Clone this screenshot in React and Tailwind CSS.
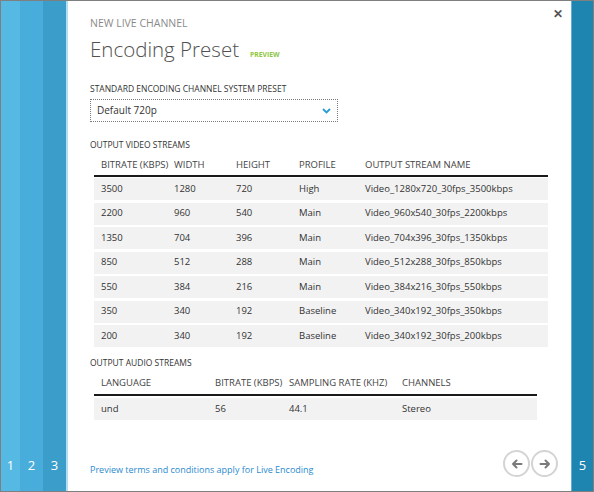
import React from 'react';

const video = [
  ['3500', '1280', '720', 'High', 'Video_1280x720_30fps_3500kbps'],
  ['2200', '960', '540', 'Main', 'Video_960x540_30fps_2200kbps'],
  ['1350', '704', '396', 'Main', 'Video_704x396_30fps_1350kbps'],
  ['850', '512', '288', 'Main', 'Video_512x288_30fps_850kbps'],
  ['550', '384', '216', 'Main', 'Video_384x216_30fps_550kbps'],
  ['350', '340', '192', 'Baseline', 'Video_340x192_30fps_350kbps'],
  ['200', '340', '192', 'Baseline', 'Video_340x192_30fps_200kbps'],
];

function Strip({ className, label }) {
  return (
    <div className={`flex flex-col justify-end items-center pb-[19px] text-white text-[13px] leading-none ${className}`}>
      {label}
    </div>
  );
}

function NavButton({ dir }) {
  return (
    <button className="w-[27px] h-[27px] rounded-full border-2 border-[#d4d4d4] flex items-center justify-center">
      <svg width="12" height="12" viewBox="0 0 12 12" fill="none" stroke="#7a7a7a" strokeWidth="2" strokeLinecap="round" strokeLinejoin="round">
        {dir === 'left' ? (
          <path d="M10.5 6H2M5.5 2.5L2 6l3.5 3.5" />
        ) : (
          <path d="M1.5 6H10M6.5 2.5L10 6l-3.5 3.5" />
        )}
      </svg>
    </button>
  );
}

export default function App() {
  return (
    <div
      className="w-[594px] h-[492px] border border-[#7f7f7f] flex bg-white overflow-hidden"
      style={{ fontFamily: '"Open Sans", "Noto Sans", sans-serif' }}
    >
      <Strip className="w-[19px] bg-[#55b9e4]" label="1" />
      <Strip className="w-[23px] bg-[#49addb]" label="2" />
      <Strip className="w-[23px] bg-[#3b9dca]" label="3" />

      <div className="flex-1 relative border-l-2 border-[#b3def2] pl-[22px] pr-[20px] flex flex-col">
        <button className="absolute right-[8px] top-[7px] text-[#555] text-[12px] font-bold leading-none">✕</button>

        <div className="pt-[16px] text-[10.5px] leading-[13px] text-[#8a8a8a]">NEW LIVE CHANNEL</div>

        <div className="flex items-baseline mt-[6px]">
          <h1 className="text-[20.5px] leading-[26px] font-light text-[#505050]">Encoding Preset</h1>
          <span className="ml-[11px] text-[6.8px] font-bold text-[#8cc63f]">PREVIEW</span>
        </div>

        <div className="mt-[21px] text-[8.5px] leading-[12px] text-[#333]">STANDARD ENCODING CHANNEL SYSTEM PRESET</div>
        <div className="mt-[4px] w-[248px] h-[23px] border border-dotted border-[#7a7a7a] flex items-center justify-between pl-[6px] pr-[6px]">
          <span className="text-[10px] text-[#333]">Default 720p</span>
          <svg width="9" height="6" viewBox="0 0 9 6" fill="none" stroke="#2a9bd8" strokeWidth="1.8">
            <path d="M1 1l3.5 3.5L8 1" />
          </svg>
        </div>

        <div className="mt-[17px] text-[8.5px] leading-[11px] text-[#333]">OUTPUT VIDEO STREAMS</div>
        <div className="mt-[5px] ml-[4px] w-[454px] text-[9.5px] text-[#333]">
          <div className="grid grid-cols-[73px_62px_63px_66px_1fr] pl-[7px] h-[22px] items-center border-b-2 border-[#1a1a1a] text-[#444]">
            <span>BITRATE (KBPS)</span>
            <span>WIDTH</span>
            <span>HEIGHT</span>
            <span>PROFILE</span>
            <span>OUTPUT STREAM NAME</span>
          </div>
          <div className="flex flex-col gap-[2.5px] mt-[1px]">
            {video.map((r) => (
              <div key={r[4]} className="grid grid-cols-[73px_62px_63px_66px_1fr] pl-[7px] h-[22px] items-center bg-[#f2f2f2]">
                {r.map((c, i) => (
                  <span key={i}>{c}</span>
                ))}
              </div>
            ))}
          </div>
        </div>

        <div className="mt-[10px] text-[8.5px] leading-[11px] text-[#333]">OUTPUT AUDIO STREAMS</div>
        <div className="mt-[5px] ml-[4px] w-[443px] text-[9.5px] text-[#333]">
          <div className="grid grid-cols-[114px_74px_113px_1fr] pl-[7px] h-[23px] items-center border-b-2 border-[#1a1a1a] text-[#444]">
            <span>LANGUAGE</span>
            <span>BITRATE (KBPS)</span>
            <span>SAMPLING RATE (KHZ)</span>
            <span>CHANNELS</span>
          </div>
          <div className="grid grid-cols-[114px_74px_113px_1fr] pl-[7px] h-[22px] mt-[2px] items-center bg-[#f2f2f2]">
            <span>und</span>
            <span>56</span>
            <span>44.1</span>
            <span>Stereo</span>
          </div>
        </div>

        <div className="mt-auto pb-[14px] flex items-end justify-between">
          <a className="text-[9px] text-[#2a8ad0] mb-[1px]">Preview terms and conditions apply for Live Encoding</a>
          <div className="flex gap-[1px] mr-[-7px]">
            <NavButton dir="left" />
            <NavButton dir="right" />
          </div>
        </div>
      </div>

      <div className="w-[22px] bg-[#1e84b0] border-l border-[#5fb0d4] flex flex-col justify-end items-center pb-[19px] text-white text-[13px] leading-none">
        5
      </div>
    </div>
  );
}
